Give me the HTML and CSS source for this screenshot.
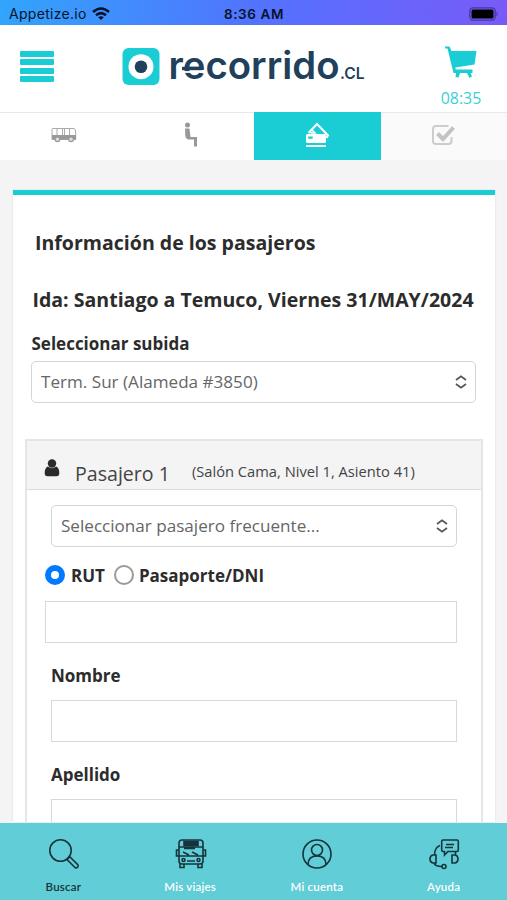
FILE: index.html
```html
<!DOCTYPE html>
<html lang="es">
<head>
<meta charset="utf-8">
<title>Recorrido.cl</title>
<link rel="stylesheet" href="styles.css">
</head>
<body>
<div class="app">
  <div class="status">
    <div class="carrier"><span>Appetize.io</span>
      <svg width="18" height="14" viewBox="0 0 18 14" fill="none" stroke="#07132b" stroke-width="2.6"><path d="M1 5Q9-2 17 5M4 8.3Q9 4 14 8.3"/><path d="M9 13L6.2 10.3Q9 8 11.8 10.3Z" fill="#07132b" stroke="none"/></svg>
    </div>
    <span class="clock">8:36 AM</span>
    <svg class="battery" width="30" height="14" viewBox="0 0 30 14"><rect x=".8" y=".8" width="25.400" height="12.400" rx="3.500" fill="none" stroke="#4537a0" stroke-width="1.300"/><rect x="2.500" y="2.500" width="22" height="9" rx="1.500" fill="#000"/><path d="M27.500 4.500Q30 7 27.500 9.500Z" fill="#4537a0"/></svg>
  </div>
  <header class="header">
    <div class="burger"><i></i><i></i><i></i><i></i></div>
    <svg class="logo" width="244" height="56" viewBox="0 -8 244 56">
      <rect x=".5" y="1" width="37" height="37" rx="6" fill="#1acdd5"/>
      <circle cx="19" cy="19.700" r="12.500" fill="#fff"/><circle cx="19" cy="19.700" r="6.300" fill="#20405b"/>
      <text class="word" x="46.500" y="31.500" textLength="171" lengthAdjust="spacingAndGlyphs">recorrido</text>
      <path d="M61 25H71" stroke="#fff" stroke-width="1.800"/><path d="M60 21.500H80" stroke="#20405b" stroke-width="3.400"/>
      <text class="cl" x="218" y="31.500" textLength="24.500" lengthAdjust="spacingAndGlyphs">.CL</text>
    </svg>
    <div class="cart">
      <svg width="34" height="34" viewBox="0 0 34 34"><path d="M1 1.500H5.500L7.500 6H32.500L30.500 19.500L11.500 22.500V24.500H28.500V28H26.500L28 31.500L25.500 33L23 28H16L14.500 32.500L11.500 32L12 28H9.500L3.500 3.500H1Z" fill="#1acdd5"/></svg>
      <span>08:35</span>
    </div>
  </header>
  <nav class="steps">
    <div class="step"><svg width="26" height="16" viewBox="0 0 26 16"><path d="M1.500 1.500H23Q24.500 1.500 24.700 5V12.500H1V2Z" fill="#fff" stroke="#aaa"/><path d="M1 8H25V12.500H1Z" fill="#999"/><path d="M6 1.500V8M11.500 1.500V8M13.500 1.500V8M18.500 1.500V8" stroke="#aaa"/><g fill="#ddd" stroke="#999" stroke-width="1.200"><circle cx="6.500" cy="12.300" r="2.400"/><circle cx="20" cy="12.300" r="2.400"/></g></svg></div>
    <div class="step"><svg width="14" height="26" viewBox="0 0 14 26"><circle cx="3.500" cy="3" r="2.500" fill="#999"/><path d="M1 6.500H5.500L6.500 15H13V24.500H10V17.500H4Q1.500 17 1.300 14Z" fill="#999"/></svg></div>
    <div class="step active"><svg width="26" height="26" viewBox="0 0 26 26"><path d="M3.500 11L12 2L23 13.500L21.500 16" fill="none" stroke="#fff" stroke-width="2"/><path d="M6 7L10 11H6.500L4.500 9.500" stroke="#fff" stroke-width="1.500" fill="none"/><rect x="1" y="12" width="20" height="9" rx="1.500" fill="#fff"/><rect x="3.200" y="14.500" width="4.500" height="2.200" fill="#1acdd5"/><path d="M1 24H21" stroke="#fff" stroke-width="2"/></svg></div>
    <div class="step last"><svg width="26" height="24" viewBox="0 0 26 24"><path d="M17.500 3H5Q2 3 2 6V18Q2 21 5 21H17.500Q20.500 21 20.500 18V14" fill="none" stroke="#ccc" stroke-width="2"/><path d="M6.500 10.500L12 16L22.500 4.500" fill="none" stroke="#c3c3c3" stroke-width="4"/></svg></div>
  </nav>
  <main class="card">
    <h1>Información de los pasajeros</h1>
    <h2>Ida: Santiago a Temuco, Viernes 31/MAY/2024</h2>
    <label class="label pickup">Seleccionar subida</label>
    <div class="select stop"><span>Term. Sur (Alameda #3850)</span><svg width="14" height="14" viewBox="0 0 14 14"><path d="M2 5L7 1.300L12 5M2 9L7 12.700L12 9"/></svg></div>
    <section class="passenger">
      <div class="passenger-head">
        <svg width="16" height="18" viewBox="0 0 16 18" fill="#2b2b2b"><circle cx="8" cy="4.500" r="4.200"/><path d="M4 7.500Q8 11 12 7.500Q15.300 8.500 15.300 14Q15.300 17.300 12.500 17.300H3.500Q.7 17.300 .7 14Q.7 8.500 4 7.500Z"/></svg>
        <span class="name">Pasajero 1</span><span class="seat">(Salón Cama, Nivel 1, Asiento 41)</span>
      </div>
      <div class="form">
        <div class="select"><span>Seleccionar pasajero frecuente...</span><svg width="14" height="14" viewBox="0 0 14 14"><path d="M2 5L7 1.300L12 5M2 9L7 12.700L12 9"/></svg></div>
        <div class="radios"><i class="radio on"></i><span class="rut">RUT</span><i class="radio"></i><span class="dni">Pasaporte/DNI</span></div>
        <div class="input wide"></div>
        <label class="label field">Nombre</label>
        <div class="input"></div>
        <label class="label field">Apellido</label>
        <div class="input"></div>
      </div>
    </section>
  </main>
  <footer class="tabs">
    <div class="tab current"><svg width="32" height="32" viewBox="0 0 32 32"><circle cx="12.500" cy="12.500" r="10.700"/><path d="M20 20L22 19L30 27Q30.500 30 27.500 30L19.500 22Z"/></svg><span>Buscar</span></div>
    <div class="tab"><svg width="32" height="32" viewBox="0 0 32 32"><rect x="4" y="2" width="24" height="24" rx="3"/><rect x="9" y="3.500" width="14" height="4" fill="#17333b"/><path d="M4 9H28M4 18H28M9 10.500H20M8 14L14 17M17 14L23 17M4 12H1.500V18H4M28 12H30.500V18H28M5 26V29.500H9V26M23 26V29.500H27V26M12 23H20"/><circle cx="8.500" cy="22" r="1.500"/><circle cx="23.500" cy="22" r="1.500"/></svg><span>Mis viajes</span></div>
    <div class="tab"><svg width="32" height="32" viewBox="0 0 32 32"><circle cx="16" cy="16" r="14"/><circle cx="16" cy="12" r="5.500"/><path d="M7 26.500Q7 18 16 18T25 26.500"/></svg><span>Mi cuenta</span></div>
    <div class="tab"><svg width="32" height="32" viewBox="0 0 32 32"><path d="M15 2H29Q30.300 2 30.300 3.500V12Q30.300 13.500 29 13.500H20L16.500 17V13.500H15Q13.700 13.500 13.700 12V3.500Q13.700 2 15 2ZM18 6.500H26M17 9.500H25M12 7.500Q6.500 9.500 6.500 17M8 17H5Q2 17.500 2 21T5 25H8ZM24 17H27Q30 17.500 30 21T27 25H24ZM27.500 14V17M6 25Q7 28.500 14 28.500"/><circle cx="16" cy="28.500" r="2"/></svg><span>Ayuda</span></div>
  </footer>
</div>
</body>
</html>
```
FILE: styles.css
```css
* { box-sizing: border-box; }
body { margin: 0; font-family: "Open Sans", "Noto Sans", sans-serif; color: #2c2c2c; }
h1, h2 { margin: 0; }
svg { display: block; flex: none; }
.app { width: 507px; height: 900px; overflow: hidden; background: #f4f4f4; display: flex; flex-direction: column; }
.status { flex: none; height: 25px; padding: 2px 8px 0 9px; display: grid; grid-template-columns: 1fr auto 1fr; align-items: center; background: linear-gradient(100deg, #31a5fc, #5273fe 50%, #795af9); font-family: Inter, sans-serif; font-size: 14px; color: #07132b; }
.carrier { display: flex; align-items: center; gap: 5px; letter-spacing: .3px; }
.clock { font-size: 13.500px; font-weight: 600; letter-spacing: .6px; }
.battery { justify-self: end; }
.header { flex: none; height: 87px; background: #fff; display: flex; align-items: flex-start; }
.burger { margin: 26px 0 0 20px; width: 34px; display: flex; flex-direction: column; gap: 2.300px; }
.burger i { height: 6px; border-radius: 1px; background: #1acdd5; }
.logo { margin: 14px 0 0 68px; overflow: visible; }
.word, .cl { font-family: Inter, sans-serif; font-weight: 600; fill: #20405b; }
.word { font-size: 38px; }
.cl { font-size: 15.500px; }
.cart { margin: 20px 0 0 72px; width: 46px; display: flex; flex-direction: column; align-items: center; color: #3bcfd7; font-size: 15.900px; line-height: 20px; }
.cart span { margin-top: 9px; }
.steps { flex: none; height: 48px; display: grid; grid-template-columns: 127px 127px 127px 126px; }
.step { display: flex; justify-content: center; align-items: center; background: #fff; border-top: 1px solid #e8e8e8; padding-bottom: 3px; }
.step.active { background: #1acdd5; border-color: #1acdd5; }
.step.last { background: #fafafa; }
.card { flex: none; margin: 30px 12px 0 13px; height: 632px; overflow: hidden; background: #fff; border-top: 5px solid #1acdd5; box-shadow: 0 0 2px #ddd; }
h1 { margin: 34px 0 0 22px; font-size: 19.550px; line-height: 28px; white-space: nowrap; }
h2 { margin: 29px 0 0 19.500px; font-size: 19.550px; line-height: 28px; white-space: nowrap; }
.label { display: block; font-weight: 700; font-size: 17px; line-height: 24px; }
.pickup { margin: 18px 0 0 18.500px; }
.select { height: 42px; padding: 0 7px 0 9px; display: flex; justify-content: space-between; align-items: center; border: 1.500px solid #d5d5d5; border-radius: 5px; background: #fff; font-size: 17.100px; line-height: 24px; color: #666; }
.select svg { fill: none; stroke: #555; stroke-width: 1.700; }
.stop { margin: 5px 19px 0 18px; }
.passenger { margin: 36px 12px 0; border: 2px solid #e5e5e5; height: 500px; }
.passenger-head { height: 49px; padding: 12px 0 0 17px; display: flex; align-items: center; background: #f4f4f4; border-bottom: 1px solid #ddd; }
.passenger-head svg { margin-bottom: 6px; }
.name { margin: 4px 0 0 15px; font-size: 19.600px; color: #444; }
.seat { margin-left: 22px; font-size: 14.700px; color: #444; }
.form { padding: 15px 24px 0; }
.radios { display: flex; align-items: center; height: 24px; margin: 16px 0 14px -6px; font-size: 17px; font-weight: 700; }
.radios span { padding-top: 1px; }
.radio { flex: none; width: 20px; height: 20px; border: 2px solid #999; border-radius: 50%; }
.radio.on { border: 6px solid #007aff; }
.rut { margin: 0 9px 0 6px; }
.dni { margin-left: 5px; }
.input { height: 42px; border: 1.500px solid #d8d8d8; background: #fff; }
.wide { margin-left: -6px; }
.field { height: 57px; padding-top: 21px; }
.tabs { flex: none; margin-top: 1px; height: 78px; background: #61cdd6; display: grid; grid-template-columns: repeat(4, 1fr); }
.tab { display: flex; flex-direction: column; align-items: center; padding-top: 15px; color: #fff; font-family: Lato, sans-serif; font-weight: 600; font-size: 11.500px; line-height: 14px; gap: 10px; letter-spacing: .2px; }
.tab svg { fill: none; stroke: #17333b; stroke-width: 1.600; margin-left: 1px; }
.current { color: #17333b; }
```
